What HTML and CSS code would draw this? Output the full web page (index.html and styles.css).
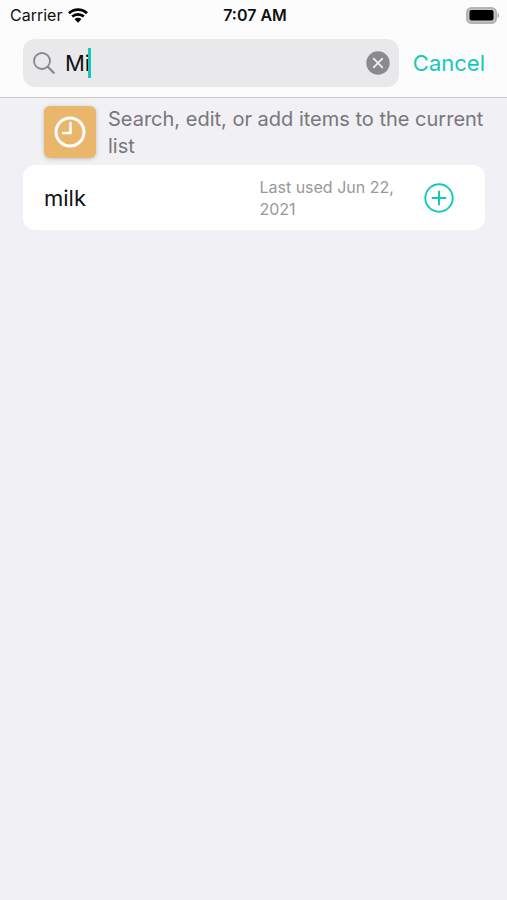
FILE: index.html
```html
<!DOCTYPE html>
<html lang="en">
<head>
<meta charset="utf-8">
<meta name="viewport" content="width=device-width, initial-scale=1">
<title>Search items</title>
<link rel="stylesheet" href="styles.css">
</head>
<body>
<header class="top">
  <div class="status">
    <div class="carrier">
      <span>Carrier</span>
      <svg class="wifi" width="20" height="15" viewBox="0 0 20 15" aria-hidden="true">
        <path d="M1 5.2C6 .4 14 .4 19 5.2M4.2 8.6c3.3-3.1 8.300-3.100 11.600 0" fill="none" stroke="#000" stroke-width="2.700"/>
        <path d="M6.600 11.200c1.900-1.800 4.900-1.800 6.800 0L10 14.700z" fill="#000"/>
      </svg>
    </div>
    <time class="time">7:07 AM</time>
    <svg class="battery" width="34" height="17" viewBox="0 0 34 17" aria-hidden="true">
      <rect x="1" y="1" width="29" height="15" rx="4.500" fill="#c4c4c4" stroke="#b4b4b4" stroke-width="2"/>
      <rect x="3.500" y="3" width="24" height="10.500" rx="2" fill="#000"/>
      <path d="M31.500 6v5c2.200-.6 2.200-4.400 0-5z" fill="#b4b4b4"/>
    </svg>
  </div>
  <form class="search-row">
    <div class="field">
      <svg width="22" height="22" viewBox="0 0 22 22" aria-hidden="true">
        <circle cx="9" cy="9" r="8" fill="none" stroke="#88888b" stroke-width="1.800"/>
        <path d="M14.700 14.700 20.700 20.700" stroke="#88888b" stroke-width="2.300" stroke-linecap="round"/>
      </svg>
      <div class="entry">
        <input class="input" type="text" value="Mi" aria-label="Search">
        <span class="caret"></span>
      </div>
      <button class="icon-button" type="reset" aria-label="Clear text">
        <svg width="24" height="24" viewBox="0 0 24 24" aria-hidden="true">
          <circle cx="12" cy="12" r="11.700" fill="#8a8a8e"/>
          <path d="m7.700 7.700 8.600 8.600m0-8.600-8.600 8.600" stroke="#f0f0f2" stroke-width="1.800" stroke-linecap="round"/>
        </svg>
      </button>
    </div>
    <button class="cancel" type="button">Cancel</button>
  </form>
</header>
<main class="content">
  <section class="hint">
    <div class="tile">
      <svg width="32" height="32" viewBox="0 0 32 32" aria-hidden="true">
        <circle cx="16" cy="16" r="14" fill="none" stroke="#fff" stroke-width="3"/>
        <path d="M16.500 7v10H9" fill="none" stroke="#fff" stroke-width="2.500" stroke-linecap="round" stroke-linejoin="round"/>
      </svg>
    </div>
    <p class="hint-text">Search, edit, or add items to the current list</p>
  </section>
  <ul class="results">
    <li class="item">
      <span class="name">milk</span>
      <span class="used">Last used Jun 22, 2021</span>
      <button class="icon-button" type="button" aria-label="Add milk">
        <svg width="30" height="30" viewBox="0 0 30 30" aria-hidden="true">
          <circle cx="15" cy="15" r="13.700" fill="none" stroke="#14c8be" stroke-width="1.900"/>
          <path d="M15 8.500v13M8.500 15h13" stroke="#14c8be" stroke-width="2" stroke-linecap="round"/>
        </svg>
      </button>
    </li>
  </ul>
</main>
</body>
</html>
```
FILE: styles.css
```css
* {
  box-sizing: border-box;
}

body {
  margin: 0;
  min-height: 100vh;
  background: #f0f0f5;
  color: #111;
  font-family: Inter, "Liberation Sans", sans-serif;
}

svg {
  display: block;
  flex: none;
}

button {
  border: 0;
  padding: 0;
  background: none;
  font: inherit;
}

.top {
  background: #fcfcfd;
  border-bottom: 1px solid #cbcbcf;
}

.status {
  display: grid;
  grid-template-columns: 1fr auto 1fr;
  align-items: center;
  height: 30px;
  padding: 0 7px 0 10px;
  font-size: 16px;
}

.carrier {
  display: flex;
  align-items: center;
  gap: 6px;
}

.time {
  font-weight: 600;
}

.battery {
  justify-self: end;
}

.search-row {
  display: flex;
  align-items: center;
  gap: 14px;
  margin: 0;
  padding: 9px 22px 10px 23px;
}

.field {
  display: flex;
  flex: 1;
  align-items: center;
  gap: 10px;
  min-width: 0;
  height: 48px;
  padding: 0 9px 0 10px;
  border-radius: 12px;
  background: #e9e9eb;
}

.entry {
  position: relative;
  flex: 1;
  min-width: 0;
}

.input {
  display: block;
  width: 100%;
  padding: 0;
  border: 0;
  outline: 0;
  background: none;
  color: #111;
  font: inherit;
  font-size: 22px;
  line-height: 30px;
}

.caret {
  position: absolute;
  top: 0;
  left: 23px;
  width: 3px;
  height: 30px;
  background: #14c8be;
}

.cancel {
  color: #14c8be;
  font-size: 22px;
  line-height: 28px;
}

.content {
  padding: 8px 22px 8px 23px;
}

.hint {
  display: flex;
  align-items: flex-start;
  gap: 12px;
  padding-left: 21px;
}

.tile {
  display: grid;
  flex: none;
  place-items: center;
  width: 52px;
  height: 52px;
  border-radius: 6px;
  background: #e9b66c;
  box-shadow: 0 1px 4px #0003;
}

.hint-text {
  margin: 0;
  color: #77777b;
  font-size: 20px;
  line-height: 27px;
}

.results {
  margin: 5px 0 0;
  padding: 0;
  list-style: none;
}

.item {
  display: grid;
  grid-template-columns: 4fr 3fr auto;
  align-items: center;
  min-height: 65px;
  padding: 10px 31px 10px 21px;
  border-radius: 12px;
  background: #fff;
  column-gap: 12px;
}

.name {
  font-size: 22px;
}

.used {
  color: #98989b;
  font-size: 16px;
  line-height: 22px;
}
```
